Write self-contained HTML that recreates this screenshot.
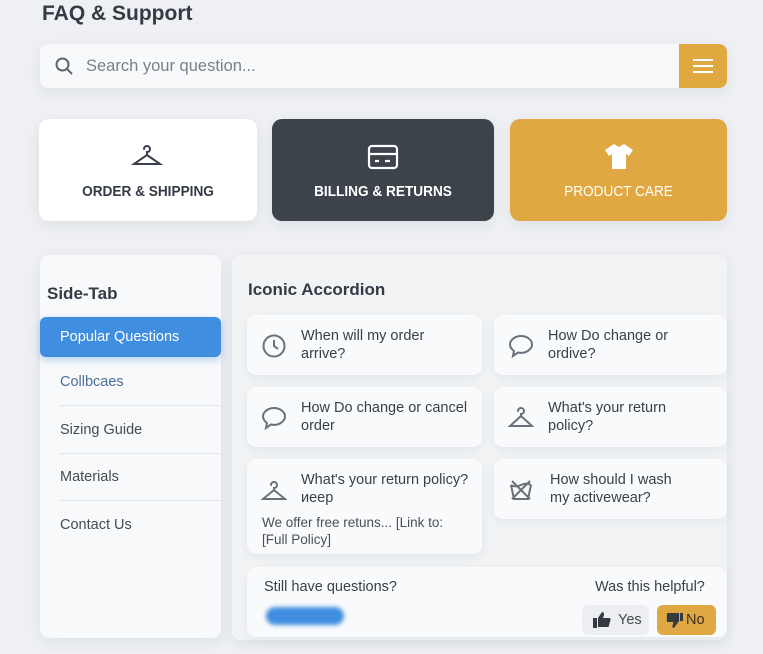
<!DOCTYPE html>
<html><head><meta charset="utf-8"><style>
*{box-sizing:border-box;margin:0;padding:0}
body{width:763px;height:654px;background:#eef0f3;font-family:"Liberation Sans",sans-serif;color:#333a44;position:relative;overflow:hidden}
.a{position:absolute}
.sh{box-shadow:0 4px 14px rgba(40,50,70,.08)}
.tile{position:absolute;background:#f9fafb;border-radius:9px;box-shadow:0 3px 10px rgba(40,50,70,.07);font-size:14.5px;line-height:18px;color:#3a404a}
.tile svg{position:absolute;left:14px;top:18px}
.tile .t{position:absolute;left:54px;top:12px}
.item{position:absolute;left:60px;font-size:14.5px;color:#444b55}
.sep{position:absolute;left:60px;width:161px;height:1px;background:#e3e6ea}
.lbl{position:absolute;left:0;top:65px;text-align:center;font-size:14.5px;font-weight:bold;transform:scaleX(.94)}
</style></head><body>
<div class="a" style="left:42px;top:2px;font-size:21px;font-weight:bold;color:#343b45">FAQ &amp; Support</div>

<div class="a sh" style="left:40px;top:44px;width:687px;height:44px;background:#f8f9fa;border-radius:8px;overflow:hidden">
<svg class="a" style="left:14px;top:12px" width="20" height="20" viewBox="0 0 20 20" fill="none" stroke="#5f6670" stroke-width="2"><circle cx="8.5" cy="8.5" r="6"/><path d="M13 13l5 5"/></svg>
<div class="a" style="left:46px;top:13px;font-size:16.5px;color:#7a8089">Search your question...</div>
<div class="a" style="left:639px;top:0;width:48px;height:44px;background:#e0a93f">
<svg class="a" style="left:13px;top:13px" width="22" height="18" viewBox="0 0 22 18" stroke="#fff" stroke-width="2"><path d="M1 3h20M1 9h20M1 15h20"/></svg></div>
</div>

<div class="a sh" style="left:39px;top:119px;width:218px;height:102px;background:#fff;border-radius:10px">
<svg class="a" style="left:92px;top:24px" width="32" height="26" viewBox="0 0 32 26" fill="none" stroke="#3a404a" stroke-width="2" stroke-linecap="round"><path d="M13 6a3 3 0 1 1 3 3v3L3 21h26L16 12"/></svg>
<div class="lbl" style="width:218px;color:#333a44">ORDER &amp; SHIPPING</div></div>

<div class="a sh" style="left:272px;top:119px;width:222px;height:102px;background:#3d434b;border-radius:10px">
<svg class="a" style="left:95px;top:25px" width="32" height="26" viewBox="0 0 32 26" fill="none" stroke="#fff" stroke-width="2.2"><rect x="2" y="2" width="28" height="22" rx="3"/><path d="M2 10h28M8 17h4M18 17h5"/></svg>
<div class="lbl" style="width:222px;color:#fff">BILLING &amp; RETURNS</div></div>

<div class="a sh" style="left:510px;top:119px;width:217px;height:102px;background:#e0a843;border-radius:10px">
<svg class="a" style="left:93px;top:24px" width="32" height="26" viewBox="0 0 32 26" fill="#fff"><path d="M11 1l5 3 5-3 9 6-4 6-3-2v15H9V11l-3 2-4-6z"/></svg>
<div class="lbl" style="width:217px;color:#fff;font-weight:normal">PRODUCT CARE</div></div>

<div class="a sh" style="left:40px;top:255px;width:181px;height:383px;background:#f8f9fa;border-radius:9px"></div>
<div class="a" style="left:47px;top:284px;font-size:17px;font-weight:bold;color:#343b45">Side-Tab</div>
<div class="a" style="left:40px;top:317px;width:181px;height:40px;background:#3f8ee0;border-radius:6px;box-shadow:0 3px 8px rgba(63,142,224,.35)"></div>
<div class="a" style="left:60px;top:329px;font-size:14.5px;color:#fff">Popular Questions</div>
<div class="item" style="top:374px;color:#4d6e98">Collbcaes</div><div class="sep" style="top:405px"></div>
<div class="item" style="top:422px">Sizing Guide</div><div class="sep" style="top:453px"></div>
<div class="item" style="top:469px">Materials</div><div class="sep" style="top:500px"></div>
<div class="item" style="top:517px">Contact Us</div>

<div class="a sh" style="left:232px;top:255px;width:495px;height:385px;background:#f1f3f5;border-radius:9px"></div>
<div class="a" style="left:248px;top:280px;font-size:17px;font-weight:bold;color:#343b45">Iconic Accordion</div>

<div class="tile" style="left:247px;top:315px;width:235px;height:60px">
<svg width="26" height="26" viewBox="0 0 26 26" fill="none" stroke="#6b717a" stroke-width="2"><circle cx="13" cy="13" r="10.5"/><path d="M13 7v6l4 3"/></svg>
<div class="t">When will my order<br>arrive?</div></div>
<div class="tile" style="left:494px;top:315px;width:233px;height:60px">
<svg width="26" height="26" viewBox="0 0 26 26" fill="none" stroke="#6b717a" stroke-width="2"><path d="M13 3C7 3 2 7 2 11.5c0 3 2 5 4 6.5l-1 5 5-3.5c1 .3 2 .4 3 .4 6 0 11-4 11-8.5S19 3 13 3z"/></svg>
<div class="t">How Do change or<br>ordive?</div></div>
<div class="tile" style="left:247px;top:387px;width:235px;height:60px">
<svg width="26" height="26" viewBox="0 0 26 26" fill="none" stroke="#6b717a" stroke-width="2"><path d="M13 3C7 3 2 7 2 11.5c0 3 2 5 4 6.5l-1 5 5-3.5c1 .3 2 .4 3 .4 6 0 11-4 11-8.5S19 3 13 3z"/></svg>
<div class="t">How Do change or cancel<br>order</div></div>
<div class="tile" style="left:494px;top:387px;width:233px;height:60px">
<svg width="26" height="26" viewBox="0 0 26 26" fill="none" stroke="#6b717a" stroke-width="2" stroke-linecap="round"><path d="M10 6a3 3 0 1 1 3 3v2L2 21h22L13 11"/></svg>
<div class="t">What's your return<br>policy?</div></div>
<div class="tile" style="left:247px;top:459px;width:235px;height:95px">
<svg width="26" height="26" viewBox="0 0 26 26" fill="none" stroke="#6b717a" stroke-width="2" stroke-linecap="round"><path d="M10 8a3 3 0 1 1 3 3v2L2 22h22L13 13"/></svg>
<div class="t">What's your return policy?<br>иеер</div>
<div class="a" style="left:15px;top:55px;font-size:13.5px;color:#4a5059;line-height:17px">We offer free retuns... [Link to:<br>[Full Policy]</div></div>
<div class="tile" style="left:494px;top:459px;width:233px;height:60px">
<svg width="26" height="26" viewBox="0 0 26 26" fill="none" stroke="#6b717a" stroke-width="2"><path d="M3 8l3 14h14l3-14M3 8c3 2 6 2 10 0s7-2 10 0M4 4l18 18M22 4L4 22"/></svg>
<div class="t" style="left:56px">How should I wash<br>my activewear?</div></div>

<div class="a" style="left:247px;top:567px;width:480px;height:70px;background:#f9fafb;border-radius:9px;box-shadow:0 3px 10px rgba(40,50,70,.06)"></div>
<div class="a" style="left:264px;top:579px;font-size:14.5px;color:#3a404a">Still have questions?</div>
<div class="a" style="left:266px;top:607px;width:78px;height:18px;background:#3f8ee0;border-radius:9px;filter:blur(2px)"></div>
<div class="a" style="left:595px;top:579px;font-size:14.5px;color:#3a404a">Was this helpful?</div>
<div class="a" style="left:582px;top:605px;width:67px;height:30px;background:#eceef1;border-radius:6px"></div>
<svg class="a" style="left:593px;top:611px" width="18" height="17" viewBox="0 0 18 17" fill="#343a42"><rect x="0" y="7" width="4" height="10"/><path d="M5 7l4-6c2 0 2 2 2 3l-1 3h6c1 0 2 1 1.5 2l-2 7H5z"/></svg>
<div class="a" style="left:618px;top:612px;font-size:14.5px;color:#454b54">Yes</div>
<div class="a" style="left:657px;top:605px;width:59px;height:30px;background:#e0a843;border-radius:6px"></div>
<svg class="a" style="left:666px;top:612px" width="17" height="17" viewBox="0 0 17 17" fill="#343a42"><path d="M1 1h12v8l-5 7c-1 0-2-1-1.5-2l1-4H2c-1 0-1.5-1-1.2-2z"/><rect x="14" y="1" width="3" height="8"/></svg>
<div class="a" style="left:686px;top:612px;font-size:14.5px;color:#3a3020">No</div>
</body></html>
